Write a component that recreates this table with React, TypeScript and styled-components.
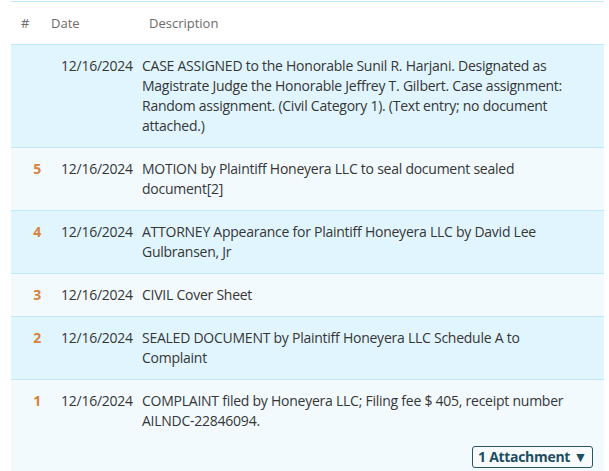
import React from "react";
import styled, { createGlobalStyle } from "styled-components";

type Entry = {
	num?: number;
	date: string;
	text: string;
	attachments?: number;
};

const entries: Entry[] = [
	{
		date: "12/16/2024",
		text: "CASE ASSIGNED to the Honorable Sunil R. Harjani. Designated as Magistrate Judge the Honorable Jeffrey T. Gilbert. Case assignment: Random assignment. (Civil Category 1). (Text entry; no document attached.)",
	},
	{
		num: 5,
		date: "12/16/2024",
		text: "MOTION by Plaintiff Honeyera LLC to seal document sealed document[2]",
	},
	{
		num: 4,
		date: "12/16/2024",
		text: "ATTORNEY Appearance for Plaintiff Honeyera LLC by David Lee Gulbransen, Jr",
	},
	{ num: 3, date: "12/16/2024", text: "CIVIL Cover Sheet" },
	{
		num: 2,
		date: "12/16/2024",
		text: "SEALED DOCUMENT by Plaintiff Honeyera LLC Schedule A to Complaint",
	},
	{
		num: 1,
		date: "12/16/2024",
		text: "COMPLAINT filed by Honeyera LLC; Filing fee $ 405, receipt number AILNDC-22846094.",
		attachments: 1,
	},
];

export default function App() {
	return (
		<>
			<GlobalStyle />
			<Page>
				<Docket>
					<HeaderRow>
						<HeadCell $pad={10}>#</HeadCell>
						<HeadCell $pad={9}>Date</HeadCell>
						<HeadCell $pad={7}>Description</HeadCell>
					</HeaderRow>
					{entries.map((entry, index) => (
						<EntryRow key={index} $shaded={index % 2 === 0}>
							<NumCell>{entry.num}</NumCell>
							<DateCell>{entry.date}</DateCell>
							<DescCell>
								{entry.text}
								{entry.attachments && (
									<AttachRow>
										<AttachButton>
											{entry.attachments} Attachment ▼
										</AttachButton>
									</AttachRow>
								)}
							</DescCell>
						</EntryRow>
					))}
				</Docket>
			</Page>
		</>
	);
}

const GlobalStyle = createGlobalStyle`
	html, body {
		margin: 0;
		padding: 0;
		background: #ffffff;
	}
	body {
		font-family: "Open Sans", "Noto Sans", sans-serif;
		color: #363636;
	}
`;

const Page = styled.div`
	padding: 1px 5px 0 11px;
	height: 471px;
	overflow: hidden;
	box-sizing: border-box;
`;

const Docket = styled.div`
	border-top: 1px solid #bfe9fb;
`;

const columns = `31px 100px 1fr`;

const HeaderRow = styled.div`
	display: grid;
	grid-template-columns: ${columns};
	height: 42px;
	align-items: center;
	background: #ffffff;
	border-bottom: 1px solid #bfe9fb;
	font-size: 13px;
	color: #6b6b6b;
`;

const HeadCell = styled.div<{ $pad: number }>`
	padding-left: ${(p) => p.$pad}px;
`;

const EntryRow = styled.div<{ $shaded: boolean }>`
	display: grid;
	grid-template-columns: ${columns};
	padding: 11px 0;
	background: ${(p) => (p.$shaded ? "#e1f5fe" : "#f2fafe")};
	border-bottom: 1px solid #bfe9fb;
	font-size: 14px;
	line-height: 20px;
	letter-spacing: -0.25px;
`;

const NumCell = styled.div`
	text-align: right;
	padding-right: 1px;
	font-weight: 700;
	color: #d9823b;
`;

const DateCell = styled.div`
	padding-left: 19px;
	white-space: nowrap;
`;

const DescCell = styled.div`
	padding-right: 30px;
`;

const AttachRow = styled.div`
	display: flex;
	justify-content: flex-end;
	margin: 15px -19px 0 0;
`;

const AttachButton = styled.button`
	font-family: "Open Sans", "Noto Sans", sans-serif;
	font-size: 14px;
	font-weight: 700;
	letter-spacing: -0.3px;
	color: #1d4f60;
	background: #f7fbfc;
	border: 1px solid #2b5566;
	border-radius: 3px;
	height: 22px;
	padding: 0 5px;
	line-height: 18px;
	cursor: pointer;
`;
